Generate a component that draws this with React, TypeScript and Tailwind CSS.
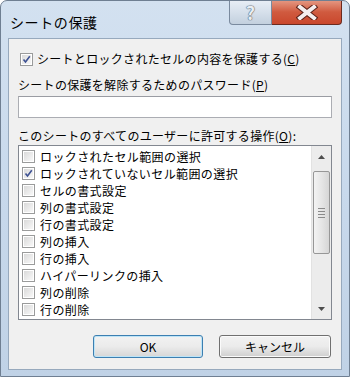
import React from "react";

const items = [
  { label: "ロックされたセル範囲の選択", checked: false },
  { label: "ロックされていないセル範囲の選択", checked: true },
  { label: "セルの書式設定", checked: false },
  { label: "列の書式設定", checked: false },
  { label: "行の書式設定", checked: false },
  { label: "列の挿入", checked: false },
  { label: "行の挿入", checked: false },
  { label: "ハイパーリンクの挿入", checked: false },
  { label: "列の削除", checked: false },
  { label: "行の削除", checked: false },
];

const CheckBox = ({ checked }: { checked: boolean }) => (
  <div className="w-[13px] h-[13px] shrink-0 border border-[#9a9b9b] bg-white p-[1px]">
    <div className="w-full h-full bg-gradient-to-br from-[#dadada] to-[#f8f8f8] relative">
      {checked && (
        <svg viewBox="0 0 9 9" className="absolute inset-0 w-full h-full">
          <path d="M1.5 4.5 L3.5 7 L7.8 1.2" fill="none" stroke="#3d5192" strokeWidth="1.6" />
        </svg>
      )}
    </div>
  </div>
);

const ScrollBar = () => (
  <div className="w-[20px] shrink-0 bg-[#ececec] border-l border-[#e2e2e2] flex flex-col items-center">
    <div className="h-[22px] flex items-center justify-center">
      <svg width="7" height="4" viewBox="0 0 7 4">
        <path d="M0 4 L3.5 0 L7 4 Z" fill="#4d4d4d" />
      </svg>
    </div>
    <div className="w-[17px] h-[83px] mt-[3px] rounded-[2px] border border-[#979797] bg-gradient-to-r from-[#f3f3f3] via-[#e6e6e6] to-[#d6d6d6] flex flex-col items-center justify-center gap-[2px]">
      <div className="w-[7px] h-[1px] bg-[#8a8a8a]" />
      <div className="w-[7px] h-[1px] bg-[#8a8a8a]" />
      <div className="w-[7px] h-[1px] bg-[#8a8a8a]" />
      <div className="w-[7px] h-[1px] bg-[#8a8a8a]" />
    </div>
    <div className="flex-1" />
    <div className="h-[20px] flex items-center justify-center">
      <svg width="7" height="4" viewBox="0 0 7 4">
        <path d="M0 0 L7 0 L3.5 4 Z" fill="#4d4d4d" />
      </svg>
    </div>
  </div>
);

export default function App() {
  return (
    <div
      className="w-[350px] h-[377px] relative flex flex-col overflow-hidden rounded-t-[7px] border border-[#6f7f92] bg-gradient-to-b from-[#d3e1f0] via-[#c8d9ec] to-[#c0d2e6] text-black"
      style={{ fontFamily: '"Noto Sans CJK JP", "Noto Sans", sans-serif' }}
    >
      {/* title bar */}
      <div className="h-[37px] shrink-0 flex items-center pl-[9px] pt-[6px]">
        <span className="text-[14px] tracking-[0.6px]">シートの保護</span>
      </div>
      <div className="absolute top-[-1px] right-[7px] flex">
        <div className="w-[43px] h-[25px] rounded-bl-[4px] border border-t-0 border-[#7a8a9e] bg-gradient-to-b from-[#e9eff6] via-[#d6e0eb] to-[#c3d0de] flex items-center justify-center">
          <span className="text-[18px] font-bold leading-none text-[#e9eef3] [text-shadow:0_0_1px_#5d6875,0_0_1px_#5d6875,0_0_1px_#5d6875]">
            ?
          </span>
        </div>
        <div className="w-[70px] h-[25px] rounded-br-[4px] border border-l-0 border-t-0 border-[#6b2a1e] bg-gradient-to-b from-[#e59a85] via-[#d05a3f] to-[#c9472c] flex items-center justify-center">
          <svg width="24" height="15" viewBox="0 0 24 15">
            <path d="M5 2 L19 13 M19 2 L5 13" stroke="#5a2018" strokeWidth="6" strokeLinecap="square" />
            <path d="M5 2 L19 13 M19 2 L5 13" stroke="#f4eeee" strokeWidth="4" strokeLinecap="square" />
          </svg>
        </div>
      </div>

      {/* client area */}
      <div className="flex-1 mx-[7px] mb-[6px] border border-[#97a9bd] bg-[#f0f0f0] flex flex-col pl-[9px] pr-[9px] pt-[12px] text-[12px] leading-[16px]">
        <div className="flex items-center gap-[4px] pl-[2px] h-[16px]">
          <CheckBox checked={true} />
          <span className="tracking-[0.3px]">
            シートとロックされたセルの内容を保護する(<span className="underline">C</span>)
          </span>
        </div>
        <div className="mt-[10px] h-[16px] tracking-[0.3px]">
          シートの保護を解除するためのパスワード(<span className="underline">P</span>)
        </div>
        <div className="mt-[3px] h-[22px] border border-[#abadb3] border-t-[#9a9ca3] bg-white" />
        <div className="mt-[10px] h-[16px] tracking-[0.3px]">
          このシートのすべてのユーザーに許可する操作(<span className="underline">O</span>):
        </div>
        <div className="mt-[1px] h-[175px] border border-[#828790] bg-white flex">
          <div className="flex-1 pt-[2px] pl-[3px]">
            {items.map((it) => (
              <div key={it.label} className="h-[17px] flex items-center gap-[5px]">
                <CheckBox checked={it.checked} />
                <span className="tracking-[0.4px]">{it.label}</span>
              </div>
            ))}
          </div>
          <ScrollBar />
        </div>
        <div className="mt-[15px] flex justify-end gap-[16px] pr-[1px]">
          <button className="w-[110px] h-[23px] rounded-[3px] border border-[#3c7fb1] bg-gradient-to-b from-[#f2f2f2] via-[#ebebeb] to-[#d6d6d6] text-[12px] shadow-[inset_0_0_0_1px_#bde4f7]">
            OK
          </button>
          <button className="w-[112px] h-[23px] rounded-[3px] border border-[#707070] bg-gradient-to-b from-[#f2f2f2] via-[#ebebeb] to-[#cfcfcf] text-[12px] shadow-[inset_0_0_0_1px_#fbfbfb]">
            キャンセル
          </button>
        </div>
      </div>
    </div>
  );
}
